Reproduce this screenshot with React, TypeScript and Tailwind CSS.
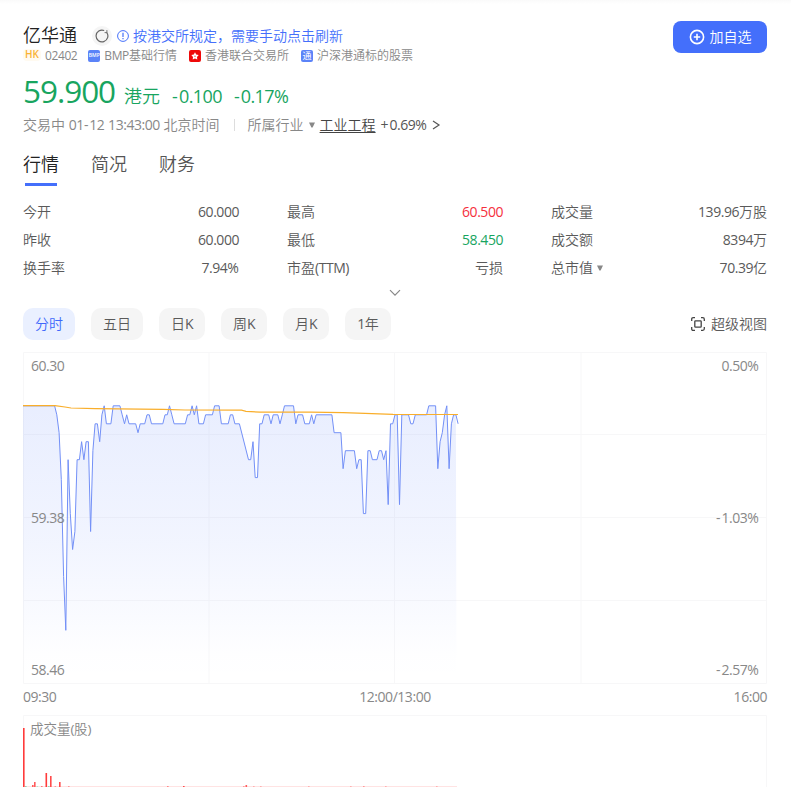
import React from "react";

// Splits text into Chinese, sign/space and other Latin runs, each with its own tracking.
function T({ children, className = "" }: { children: string; className?: string }) {
  const runs = children.match(/[\u3000-\u9fff\uff00-\uffef]+|[-+% ]+|[^-+% \u3000-\u9fff\uff00-\uffef]+/g) ?? [];
  const tracking = (r: string) => {
    if (/[\u3000-\u9fff\uff00-\uffef]/.test(r)) return "";
    if (/[-+]/.test(r)) return "font-normal tracking-[0.06em]";
    if (/[% ]/.test(r)) return "font-normal tracking-[0.01em]";
    return "font-normal tracking-[-0.033em]";
  };
  return (
    <span className={`whitespace-pre ${className}`}>
      {runs.map((r, i) => (
        <span key={i} className={tracking(r)}>
          {r}
        </span>
      ))}
    </span>
  );
}

function Caret() {
  return (
    <svg width="6" height="6" viewBox="0 0 6 6" fill="#888">
      <path d="M0 0.5h6L3.6 5.5H2.4z" />
    </svg>
  );
}

// [minute, ticks below the 60.000 line]
const PRICE: [number, number][] = [
  [0, 0], [14, 0], [15, 1], [16, 3], [17, 8.2], [18, 19], [19, 25], [20, 6], [21, 12], [22, 16], [23, 14], [24, 6], [25, 6],
  [26, 4], [27, 6], [28, 4], [29, 4], [30, 14], [31, 5], [32, 2], [33, 2], [34, 4], [35, 1], [36, 0], [37, 2], [39, 2],
  [40, 0], [43, 0], [44, 1], [45, 2], [46, 1], [47, 2], [50, 2], [51, 3], [52, 2], [54, 2], [55, 1], [56, 1], [57, 2],
  [62, 2], [63, 1], [64, 1], [65, 0], [66, 1], [67, 2], [72, 2], [73, 1], [74, 1], [75, 0], [76, 1], [77, 0], [78, 2],
  [80, 2], [81, 1], [84, 1], [85, 0], [87, 0], [88, 2], [91, 2], [92, 1], [93, 1], [94, 2], [96, 2], [100, 6], [101, 6],
  [102, 4], [103, 8], [104, 8], [105, 2], [106, 2], [107, 1], [109, 1], [110, 2], [111, 1], [113, 1], [114, 2], [115, 1],
  [116, 0], [120, 0], [121, 2], [122, 1], [124, 1], [125, 2], [127, 2], [128, 1], [129, 2], [130, 1], [137, 1], [138, 3],
  [141, 3], [142, 7], [143, 5], [147, 5], [148, 7], [149, 6], [150, 6], [151, 12], [152, 12], [153, 5], [154, 5], [155, 6],
  [157, 6], [158, 5], [159, 5], [160, 6], [161, 5], [162, 11], [163, 2], [164, 2], [165, 1], [166, 1], [167, 11], [168, 1],
  [171, 1], [172, 2], [173, 2], [174, 1], [179, 1], [180, 0], [183, 0], [184, 7], [185, 4], [186, 3], [187, 1], [188, 0],
  [189, 7], [190, 2], [191, 1], [192, 1], [193, 2],
];
const pts = PRICE.map(([m, t]) => `${(m * 2.2545).toFixed(1)},${(53.8 + t * 8.98).toFixed(1)}`);
const AVG =
  "0,53.7 32,53.7 42,55 48,56 72,56.7 140,57.4 162,58 218.5,58.2 223,59.4 237,60.2 287,60.2 320,60.6 342,61.4 370,62.4 435,62.5";

// x, height, fill
const VOLUME: [number, number, string][] = [
  [0, 59, "#ff3b3b"], [9, 2, "#ff5c5c"], [11, 5, "#ff5c5c"], [18, 1, "#ff7777"], [22.5, 14, "#ff3b3b"],
  [27, 11, "#ff4b4b"], [31.5, 1, "#ff9999"], [36, 5, "#ff4b4b"], [45, 1, "#ff9999"], [144, 1, "#ff8888"],
  [160, 1, "#ff4b4b"], [220, 1, "#ff9999"], [222.5, 2, "#ff5c5c"], [230, 1, "#ffb0b0"], [237, 1, "#ffb0b0"],
  [285, 1, "#ffb0b0"], [327, 1, "#ffb0b0"], [340, 1, "#ff9999"], [362, 1, "#ffb0b0"], [413, 1, "#ffb0b0"],
  [2, 1, "#8ed6b4"], [13.5, 1, "#b5e5cd"], [25, 1, "#8ed6b4"],
];

function Stat({ label, value, color = "", caret = false }: { label: string; value: string; color?: string; caret?: boolean }) {
  return (
    <div className="flex h-7 items-center justify-between">
      <div className="flex items-center gap-1">
        <T>{label}</T>
        {caret && <Caret />}
      </div>
      <T className={color}>{value}</T>
    </div>
  );
}

const PERIODS: [string, string][] = [
  ["分时", "w-[52px] bg-[#eaf0ff] text-[#4068fb]"],
  ["五日", "w-[52px] bg-[#f5f5f5]"],
  ["日K", "w-[46px] bg-[#f5f5f5]"],
  ["周K", "w-[46px] bg-[#f5f5f5]"],
  ["月K", "w-[46px] bg-[#f5f5f5]"],
  ["1年", "w-[46px] bg-[#f5f5f5]"],
];

export default function App() {
  return (
    <div className="h-[811px] w-[791px] overflow-hidden bg-linear-to-b from-[#fafafa] to-white to-[4px] pr-6 pl-[23px] pt-[21px] text-sm leading-5 font-[350] text-[#5a5a5a] [font-family:'Open_Sans','Noto_Sans_CJK_SC',sans-serif]">
      <header className="flex h-[53px] items-start justify-between">
        <div>
          <div className="flex h-[28px] items-center">
            <T className="text-lg text-[#222]">亿华通</T>
            <div className="mt-px ml-[15px] flex size-5 items-center justify-center rounded-full bg-[#f5f5f5]">
              <svg width="14" height="14" viewBox="0 0 14 14" fill="none" stroke="#666" strokeWidth="1.2">
                <path d="M9.2 1.5A5.9 5.9 0 1 0 11.6 3.3" />
                <path d="M11.9 1.1V3.6H9.6" strokeWidth="0.9" />
              </svg>
            </div>
            <svg className="mt-px ml-[5px]" width="12" height="12" viewBox="0 0 12 12" fill="none" stroke="#4571fb">
              <circle cx="6" cy="6" r="5.4" />
              <path d="M6 2.7v4.2M6 8v1.3" strokeWidth="1.2" />
            </svg>
            <T className="mt-px ml-1 text-[#446ffb]">按港交所规定，需要手动点击刷新</T>
          </div>
          <div className="flex h-[13px] items-center text-xs text-[#888]">
            <span className="-mt-px flex h-3 w-[18px] items-center justify-center rounded-sm bg-[#fffaf0] text-[10px] font-semibold text-[#f9b233]">HK</span>
            <T className="ml-1">02402</T>
            <span className="ml-[11px] flex size-3 items-center justify-center rounded-xs bg-[#5b83f8] text-[5px] leading-none font-semibold text-white">BMP</span>
            <T className="ml-1">BMP基础行情</T>
            <span className="ml-3 flex size-3 items-center justify-center rounded-xs bg-[#ee0a0a]">
              <svg width="8" height="8" viewBox="0 0 8 8" fill="white">
                <path d="M4 0.3 5.2 2.6 7.7 3 6 4.9 6.3 7.5 4 6.4 1.7 7.5 2 4.9 0.3 3 2.8 2.6z" />
                <circle cx="4" cy="4.2" r="0.8" fill="#ee6a6a" />
              </svg>
            </span>
            <T className="ml-1">香港联合交易所</T>
            <span className="ml-3 flex size-3 items-center justify-center rounded-xs bg-[#5b83f8] text-[9px] leading-none font-normal text-white">通</span>
            <T className="ml-1">沪深港通标的股票</T>
          </div>
        </div>
        <button className="flex h-8 w-[94px] items-center justify-center gap-[5px] rounded-lg bg-[#446ffb] text-white">
          <svg width="16" height="16" viewBox="0 0 16 16" fill="none" stroke="white" strokeWidth="1.6">
            <circle cx="8" cy="8" r="6.6" />
            <path d="M8 4.8v6.4M4.8 8h6.4" />
          </svg>
          <T>加自选</T>
        </button>
      </header>

      <div className="flex h-[38px] items-baseline text-lg text-[#18a55f]">
        <T className="text-[31.5px] leading-[34px]">59.900</T>
        <T className="ml-[9px]">港元</T>
        <T className="ml-3">-0.100</T>
        <T className="ml-3">-0.17%</T>
      </div>

      <div className="flex h-[26px] items-center text-[#888]">
        <T>交易中 01-12 13:43:00 北京时间</T>
        <div className="mr-[13px] ml-[14px] h-3 w-px bg-[#ddd]" />
        <T>所属行业</T>
        <span className="mx-[5px]"><Caret /></span>
        <T className="text-[#444] underline decoration-1 underline-offset-2">工业工程</T>
        <T className="ml-[5px] text-[#555]">+0.69%</T>
        <svg className="ml-[5px]" width="9" height="10" viewBox="0 0 9 10" fill="none" stroke="#555" strokeWidth="1.2">
          <path d="M1 1l6 4-6 4" />
        </svg>
      </div>

      <nav className="mt-[13px] flex gap-8 text-lg text-[#555]">
        <div className="flex h-[35px] flex-col items-center justify-between text-[#222]">
          <T className="leading-[26px]">行情</T>
          <div className="h-[3px] w-8 bg-[#446ffb]" />
        </div>
        <T className="leading-[26px]">简况</T>
        <T className="leading-[26px]">财务</T>
      </nav>

      <section className="mt-3 grid grid-cols-3 gap-x-12">
        <Stat label="今开" value="60.000" />
        <Stat label="最高" value="60.500" color="text-[#f5303d]" />
        <Stat label="成交量" value="139.96万股" />
        <Stat label="昨收" value="60.000" />
        <Stat label="最低" value="58.450" color="text-[#18a55f]" />
        <Stat label="成交额" value="8394万" />
        <Stat label="换手率" value="7.94%" />
        <Stat label="市盈(TTM)" value="亏损" />
        <Stat label="总市值" value="70.39亿" caret />
      </section>

      <div className="flex h-[26px] items-center justify-center pb-1">
        <svg width="12" height="8" viewBox="0 0 12 8" fill="none" stroke="#888" strokeWidth="1.2">
          <path d="M1 1.2 6 6.2l5-5" />
        </svg>
      </div>

      <div className="flex h-8 items-center justify-between">
        <div className="flex gap-4">
          {PERIODS.map(([name, cls]) => (
            <div key={name} className={`flex h-8 items-center justify-center rounded-[10px] ${cls}`}>
              <T>{name}</T>
            </div>
          ))}
        </div>
        <div className="flex items-center gap-[6px]">
          <svg width="14" height="14" viewBox="0 0 14 14" fill="none" stroke="#444" strokeWidth="1.3">
            <path d="M4 0.7H2.2Q0.7 0.7 0.7 2.2V4M10 0.7h1.8q1.5 0 1.5 1.5V4M4 13.3H2.2Q0.7 13.3 0.7 11.8V10M10 13.3h1.8q1.5 0 1.5-1.5V10" />
            <rect x="3.8" y="3.8" width="6.4" height="6.4" rx="0.8" />
          </svg>
          <T>超级视图</T>
        </div>
      </div>

      <div className="relative mt-3 h-[332px] text-[#888]">
        <svg className="block" width="744" height="332" viewBox="0 0 744 332">
          <defs>
            <linearGradient id="area" gradientUnits="userSpaceOnUse" x1="0" y1="53" x2="0" y2="331">
              <stop offset="0" stopColor="#446ffb" stopOpacity="0.12" />
              <stop offset="0.5" stopColor="#446ffb" stopOpacity="0.07" />
              <stop offset="0.9" stopColor="#446ffb" stopOpacity="0.005" />
              <stop offset="1" stopColor="#446ffb" stopOpacity="0" />
            </linearGradient>
          </defs>
          <path d="M0.5 0.5H743.5V331.5H0.5zM186 0V331M371.5 0V331M558 0V331M0 82.5H744M0 165.5H744M0 248.5H744" fill="none" stroke="#f7f7f8" />
          <polygon points={`0,331 ${pts.slice(0, -1).join(" ")} 433.5,331`} fill="url(#area)" />
          <polyline points={pts.join(" ")} fill="none" stroke="#7390f7" strokeWidth="1" strokeLinejoin="round" />
          <polyline points={AVG} fill="none" stroke="#f9ae2b" strokeWidth="1.2" />
        </svg>
        <div className="absolute inset-0 flex flex-col justify-between px-2 py-1">
          <div className="flex justify-between"><T>60.30</T><T>0.50%</T></div>
          <div className="flex justify-between"><T>59.38</T><T>-1.03%</T></div>
          <div className="flex justify-between"><T>58.46</T><T>-2.57%</T></div>
        </div>
      </div>

      <div className="flex h-[31px] justify-between pt-[3px] text-[#888]">
        <T className="w-20">09:30</T>
        <T>12:00/13:00</T>
        <T className="w-20 text-right">16:00</T>
      </div>

      <div className="relative h-[72px]">
        <T className="absolute top-1 left-[7px] text-[13.5px] text-[#888]">成交量(股)</T>
        <svg className="block" width="744" height="72" viewBox="0 0 744 72">
          <path d="M0.5 72V0.5H743.5V72" fill="none" stroke="#f7f7f8" />
          <rect x="0" y="71" width="434" height="1" fill="#ffe3e3" />
          {VOLUME.map(([x, h, c], i) => (
            <rect key={i} x={x} y={72 - h} width="1.6" height={h} fill={c} />
          ))}
        </svg>
      </div>
    </div>
  );
}
